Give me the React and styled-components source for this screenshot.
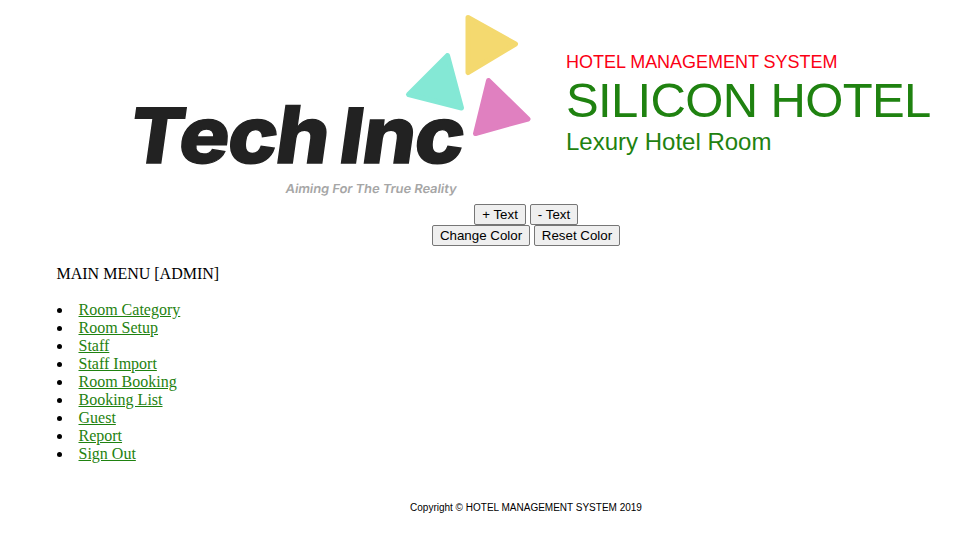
import React from 'react';
import styled, { createGlobalStyle } from 'styled-components';

const GlobalStyle = createGlobalStyle`
  body {
    margin: 0;
    background: #fff;
    overflow: hidden;
  }
`;

const Page = styled.div`
  width: 940px;
  margin-left: 56px;
  color: #000;
  font-family: "Liberation Serif", "Times New Roman", serif;
  font-size: 16px;
  line-height: 18px;
`;

const Header = styled.header`
  display: flex;
  height: 204px;
`;

const Logo = styled.svg`
  flex: none;
  width: 510px;
  height: 204px;
`;

const Wordmark = styled.text`
  font-family: Inter, sans-serif;
  font-weight: 800;
  font-size: 76px;
  fill: #222;
  stroke: #222;
  stroke-width: 1.4px;
`;

const Lowercase = styled.tspan`
  font-size: 79px;
`;

const Slogan = styled.text`
  font-family: Inter, sans-serif;
  font-weight: 600;
  font-size: 12.5px;
  fill: #a6a6a6;
`;

const Titles = styled.div`
  flex: none;
  padding-top: 52px;
  font-family: "Liberation Sans", Arial, sans-serif;
  color: #1f8210;
  white-space: nowrap;
`;

const System = styled.div`
  color: #fb0014;
  font-size: 18px;
  line-height: 20px;
  letter-spacing: -0.03px;
`;

const Hotel = styled.div`
  font-size: 49px;
  line-height: 57px;
  letter-spacing: -0.65px;
`;

const Tagline = styled.div`
  font-size: 24px;
  line-height: 26px;
`;

const Controls = styled.div`
  display: flex;
  flex-direction: column;
  align-items: center;
`;

const ButtonRow = styled.div`
  display: flex;
  gap: 4px;
`;

const Button = styled.button`
  box-sizing: border-box;
  width: ${(p) => p.$width}px;
  height: 21px;
  margin: 0;
  padding: 0;
  border: 1px solid #767676;
  border-radius: 2px;
  background: #efefef;
  color: #000;
  font: 13.333px/17px "Liberation Sans", Arial, sans-serif;
  white-space: nowrap;
`;

const MenuTitle = styled.div`
  margin-top: 19px;
  padding-left: 0.5px;
`;

const Menu = styled.ul`
  margin: 18px 0 0;
  padding: 0 0 0 0.5px;
  list-style: disc inside;
`;

const MenuLink = styled.a`
  color: #1f8210;
  text-decoration: underline;
`;

const Footer = styled.footer`
  margin-top: 36px;
  text-align: center;
  font: 10px/18px "Liberation Sans", Arial, sans-serif;
`;

const items = [
  'Room Category',
  'Room Setup',
  'Staff',
  'Staff Import',
  'Room Booking',
  'Booking List',
  'Guest',
  'Report',
  'Sign Out',
];

export default function App() {
  return (
    <>
      <GlobalStyle />
      <Page>
        <Header>
          <Logo viewBox="56 0 510 204">
            <g strokeWidth="5" strokeLinejoin="round">
              <path d="M468 17.5 L515.5 44 L468 72.5 Z" fill="#f4d96f" stroke="#f4d96f" />
              <path d="M447.5 55.5 L408.5 94.5 L461.5 108 Z" fill="#84e8d5" stroke="#84e8d5" />
              <path d="M488.5 80.5 L528 119 L475.5 133.5 Z" fill="#e080c0" stroke="#e080c0" />
            </g>
            <g transform="translate(126 162.5) skewX(-8) scale(1.06 1)">
              <Wordmark x="0.5">
                T<Lowercase x="47.5 93.5 139">ech</Lowercase>
              </Wordmark>
            </g>
            <g transform="translate(337 162.5) skewX(-8) scale(1.06 1)">
              <Wordmark x="0">
                I<Lowercase x="21.5 70.5">nc</Lowercase>
              </Wordmark>
            </g>
            <g transform="translate(285 193) skewX(-9) scale(1.04 1)">
              <Slogan x="0" textLength="164.5" lengthAdjust="spacing">
                Aiming For The True Reality
              </Slogan>
            </g>
          </Logo>
          <Titles>
            <System>HOTEL MANAGEMENT SYSTEM</System>
            <Hotel>SILICON HOTEL</Hotel>
            <Tagline>Lexury Hotel Room</Tagline>
          </Titles>
        </Header>
        <Controls>
          <ButtonRow>
            <Button $width={52}>+ Text</Button>
            <Button $width={48}>- Text</Button>
          </ButtonRow>
          <ButtonRow>
            <Button $width={98}>Change Color</Button>
            <Button $width={86}>Reset Color</Button>
          </ButtonRow>
        </Controls>
        <MenuTitle>MAIN MENU [ADMIN]</MenuTitle>
        <Menu>
          {items.map((item) => (
            <li key={item}>
              <MenuLink href="#">{item}</MenuLink>
            </li>
          ))}
        </Menu>
        <Footer>Copyright © HOTEL MANAGEMENT SYSTEM 2019</Footer>
      </Page>
    </>
  );
}
